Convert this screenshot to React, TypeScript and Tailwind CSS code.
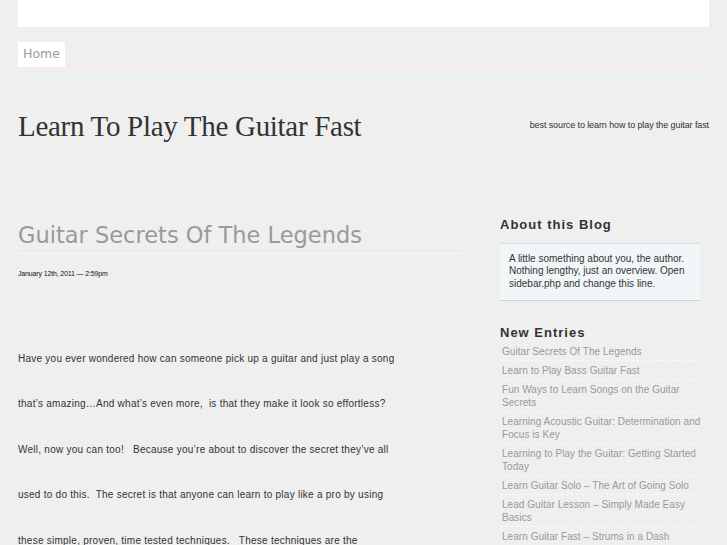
import React from "react";

const entries: string[][] = [
  ["Guitar Secrets Of The Legends"],
  ["Learn to Play Bass Guitar Fast"],
  ["Fun Ways to Learn Songs on the Guitar", "Secrets"],
  ["Learning Acoustic Guitar: Determination and", "Focus is Key"],
  ["Learning to Play the Guitar: Getting Started", "Today"],
  ["Learn Guitar Solo – The Art of Going Solo"],
  ["Lead Guitar Lesson – Simply Made Easy", "Basics"],
  ["Learn Guitar Fast – Strums in a Dash", "Results"],
];

const lines = [
  "Have you ever wondered how can someone pick up a guitar and just play a song",
  "that’s amazing…And what’s even more,  is that they make it look so effortless?",
  "Well, now you can too!   Because you’re about to discover the secret they’ve all",
  "used to do this.  The secret is that anyone can learn to play like a pro by using",
  "these simple, proven, time tested techniques.   These techniques are the",
  "same ones the pros use.",
];

export default function App() {
  return (
    <div className="h-[545px] w-full overflow-hidden bg-[#efefef] font-['Liberation_Sans',Arial,sans-serif]">
      <div className="mx-[18px] w-[691px]">
        <div className="h-[27px] bg-white" />
        <div className="mt-[15px] flex">
          <div className="flex h-[25px] w-[47px] items-center justify-center bg-white font-['DejaVu_Sans',sans-serif] text-[12.5px] text-[#9a9a9a]">
            Home
          </div>
        </div>
        <div className="mt-[11px] h-[2px] bg-[#e6f5f6]" />
        <div className="flex h-[93px] items-center justify-between">
          <div className="font-['Liberation_Serif',serif] text-[29px] tracking-[-0.3px] text-[#333] pt-[1px]">
            Learn To Play The Guitar Fast
          </div>
          <div className="text-[9px] tracking-[-0.1px] text-[#333] pb-[1px]">
            best source to learn how to play the guitar fast
          </div>
        </div>
        <div className="h-[2px] bg-[#e6f5f6]" />
        <div className="flex">
          <div className="w-[445px]">
            <div className="mt-[45px] font-['DejaVu_Sans',sans-serif] text-[22.5px] leading-[30px] text-[#9a9a9a]">
              Guitar Secrets Of The Legends
            </div>
            <div className="mt-[3px] h-px bg-[#f8f8f8]" />
            <div className="mt-[15px] text-[7px] tracking-[-0.15px] text-[#111]">
              January 12th, 2011 — 2:59pm
            </div>
            <div className="mt-[56px] text-[10px] leading-[45.5px] text-[#333] tracking-[0.25px]">
              {lines.map((l, i) => (
                <div key={i} className="whitespace-pre">{l}</div>
              ))}
            </div>
          </div>
          <div className="ml-[37px] w-[200px]">
            <div className="mt-[40px] text-[13px] font-bold tracking-[1px] text-[#333]">
              About this Blog
            </div>
            <div className="mt-[8px] border-t border-b border-t-[#dcdcdc] border-b-[#d0d0d0] bg-[#f1f7f9] px-[9px] pt-[9px] pb-[10px] text-[10px] leading-[12.5px] text-[#333]">
              A little something about you, the author. Nothing lengthy, just an overview. Open sidebar.php and change this line.
            </div>
            <div className="mt-[22px] text-[13px] font-bold tracking-[1px] text-[#333]">
              New Entries
            </div>
            <div className="-mt-px">
              {entries.map((e, i) => (
                <div
                  key={i}
                  className="border-b border-dashed border-[#fafafa] pl-[2px] pt-[3px] pb-[2px] text-[10px] leading-[13px] tracking-[0.05px] text-[#999]"
                >
                  {e.map((t, j) => (
                    <div key={j} className="whitespace-nowrap">{t}</div>
                  ))}
                </div>
              ))}
            </div>
          </div>
        </div>
      </div>
    </div>
  );
}
